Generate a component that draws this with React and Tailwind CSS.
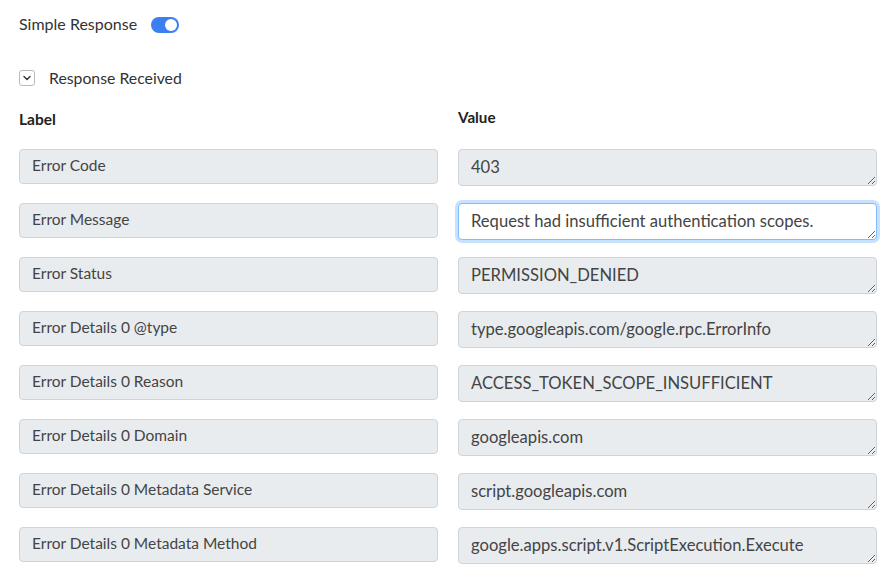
const rows = [
  ['Error Code', '403'],
  ['Error Message', 'Request had insufficient authentication scopes.'],
  ['Error Status', 'PERMISSION_DENIED'],
  ['Error Details 0 @type', 'type.googleapis.com/google.rpc.ErrorInfo'],
  ['Error Details 0 Reason', 'ACCESS_TOKEN_SCOPE_INSUFFICIENT'],
  ['Error Details 0 Domain', 'googleapis.com'],
  ['Error Details 0 Metadata Service', 'script.googleapis.com'],
  ['Error Details 0 Metadata Method', 'google.apps.script.v1.ScriptExecution.Execute'],
]

function Toggle() {
  return (
    <span className="relative inline-flex w-[28px] h-[16px] rounded-full bg-[#3b7ff0]">
      <span className="absolute right-[2px] top-[2px] w-[12px] h-[12px] rounded-full bg-white" />
    </span>
  )
}

export default function App() {
  return (
    <div className="w-[894px] h-[583px] overflow-hidden bg-white text-[#333] font-['Lato','Noto_Sans',sans-serif]">
      <div className="px-[19px] pt-[14px]">
        <div className="flex items-center gap-[14px] h-[20px]">
          <span className="text-[16px] text-[#333]">Simple Response</span>
          <span className="mt-[6px]"><Toggle /></span>
        </div>

        <div className="flex items-center gap-[14px] mt-[34px] h-[20px]">
          <span className="w-[16px] h-[16px] rounded-[3px] border border-[#b5bac0] flex items-center justify-center">
            <svg width="8" height="6" viewBox="0 0 8 6" fill="none">
              <path d="M1 1.5 L4 4.5 L7 1.5" stroke="#333" strokeWidth="1.4" strokeLinecap="round" strokeLinejoin="round" />
            </svg>
          </span>
          <span className="text-[15.8px] text-[#333]">Response Received</span>
        </div>

        <div className="grid grid-cols-[419px_419px] gap-x-[20px] mt-[18px]">
          <div className="text-[15.5px] font-bold text-[#222] h-[20px] pt-[2px]">Label</div>
          <div className="text-[15.2px] font-bold text-[#222] h-[20px]">Value</div>
        </div>

        <div className="flex flex-col gap-[17px] mt-[23px]">
          {rows.map(([label, value], i) => (
            <div key={label} className="grid grid-cols-[419px_419px] gap-x-[20px] items-start">
              <div className="h-[35px] rounded-[4px] border border-[#ced4da] bg-[#e9ecef] px-[12px] pt-[5px] text-[15.5px] text-[#444] leading-[20px]">
                {label}
              </div>
              <textarea
                readOnly
                rows={1}
                value={value}
                className={
                  i === 1
                    ? 'h-[37px] w-full rounded-[4px] border border-[#80bdff] bg-white shadow-[0_0_0_3px_rgba(0,123,255,0.22)] px-[12px] pt-[6px] text-[16.6px] leading-[22px] text-[#444] outline-none overflow-hidden'
                    : 'h-[37px] w-full rounded-[4px] border border-[#ced4da] bg-[#e9ecef] px-[12px] pt-[6px] text-[16.6px] leading-[22px] text-[#444] outline-none overflow-hidden'
                }
              />
            </div>
          ))}
        </div>
      </div>
    </div>
  )
}
